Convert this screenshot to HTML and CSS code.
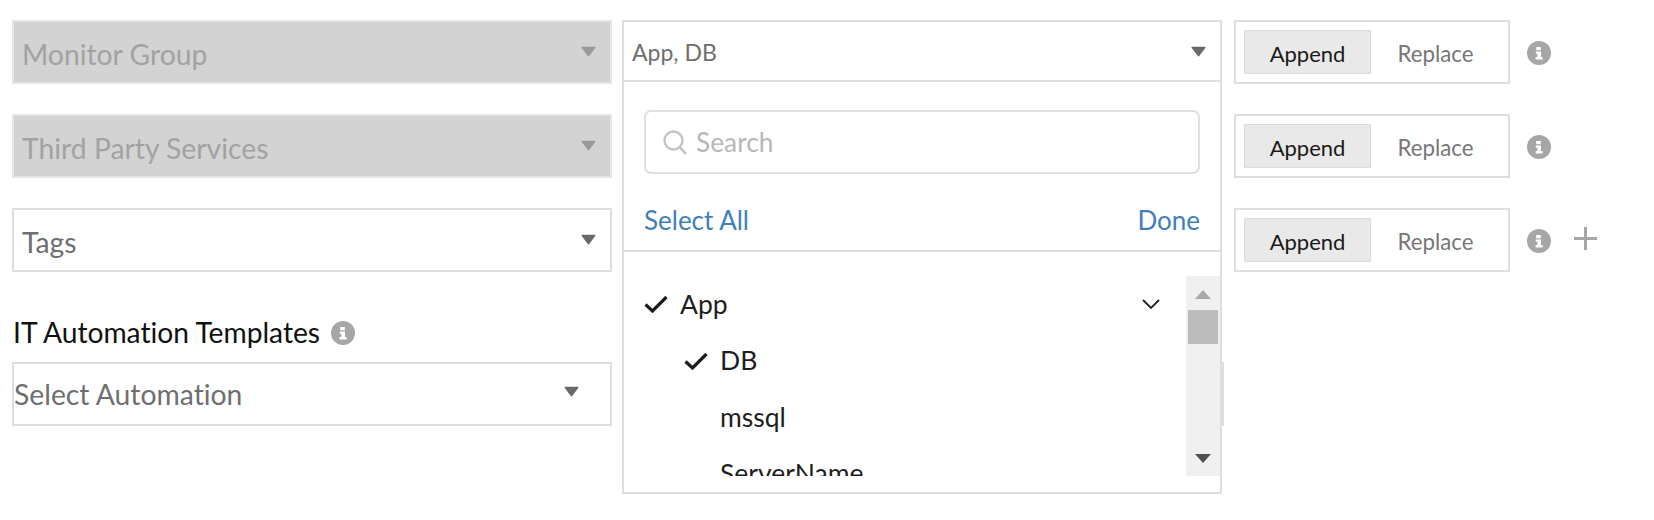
FILE: index.html
```html
<!DOCTYPE html>
<html lang="en">
<head>
<meta charset="utf-8">
<title>Monitor form</title>
<link rel="stylesheet" href="styles.css">
</head>
<body>
<svg class="defs" width="0" height="0" aria-hidden="true">
  <symbol id="caret" viewBox="0 0 14 10"><path d="M1 1.2H13L7 9Z" fill="currentColor" stroke="currentColor" stroke-width="1.2" stroke-linejoin="round"/></symbol>
  <symbol id="info" viewBox="0 0 24 24"><circle cx="12" cy="12" r="12" fill="#a6a6a6"/><path d="M9.2 6h4.6v3.2H9.2zM8.8 10.4h5.2v5.6h1.6v2.4H8.6V16h1.8v-3.2H8.8z" fill="#fff"/></symbol>
  <symbol id="check" viewBox="0 0 24 18"><path d="M1.5 9.5 8.5 16 22.5 2" fill="none" stroke="#1c1c1c" stroke-width="3.2"/></symbol>
</svg>
<main class="form">
  <div class="row">
    <div class="select disabled"><span>Monitor Group</span><svg class="caret"><use href="#caret"/></svg></div>
    <div class="open-wrap">
      <div class="select open-head"><span class="value">App, DB</span><svg class="caret"><use href="#caret"/></svg></div>
      <div class="panel">
        <div class="search">
          <svg class="search-icon" viewBox="0 0 24 25"><circle cx="10.5" cy="10.5" r="9" fill="none" stroke="#c4c4c4" stroke-width="2.4"/><path d="M16.8 17.2 23 24" stroke="#c4c4c4" stroke-width="2.6" fill="none"/></svg>
          <span>Search</span>
        </div>
        <div class="actions"><a>Select All</a><a>Done</a></div>
        <div class="list-wrap">
          <ul class="list">
            <li class="item"><svg class="check"><use href="#check"/></svg><span>App</span><svg class="chevron" viewBox="0 0 18 10"><path d="M1 1 9 9 17 1" fill="none" stroke="#222" stroke-width="1.8"/></svg></li>
            <li class="item child"><svg class="check"><use href="#check"/></svg><span>DB</span></li>
            <li class="item child"><span>mssql</span></li>
            <li class="item child"><span>ServerName</span></li>
          </ul>
          <div class="scrollbar">
            <svg class="arrow" viewBox="0 0 16 9"><path d="M8 0 16 9H0Z" fill="#a8a8a8"/></svg>
            <div class="thumb"></div>
            <svg class="arrow down" viewBox="0 0 16 9"><path d="M0 0H16L8 9Z" fill="#505050"/></svg>
          </div>
        </div>
      </div>
    </div>
    <div class="toggle"><span class="on">Append</span><span class="off">Replace</span></div>
    <svg class="info"><use href="#info"/></svg>
  </div>
  <div class="row">
    <div class="select disabled"><span>Third Party Services</span><svg class="caret"><use href="#caret"/></svg></div>
    <div class="spacer"></div>
    <div class="toggle"><span class="on">Append</span><span class="off">Replace</span></div>
    <svg class="info"><use href="#info"/></svg>
  </div>
  <div class="row">
    <div class="select"><span>Tags</span><svg class="caret"><use href="#caret"/></svg></div>
    <div class="spacer"></div>
    <div class="toggle"><span class="on">Append</span><span class="off">Replace</span></div>
    <svg class="info"><use href="#info"/></svg>
    <svg class="plus" viewBox="0 0 23 23"><path d="M11.5 0V23M0 11.5H23" stroke="#a6a6a6" stroke-width="3" fill="none"/></svg>
  </div>
  <div class="row last">
    <div class="field">
      <div class="label">IT Automation Templates<svg class="info small"><use href="#info"/></svg></div>
      <div class="select automation"><span>Select Automation</span><svg class="caret"><use href="#caret"/></svg></div>
    </div>
    <div class="select behind"></div>
  </div>
</main>
</body>
</html>
```
FILE: styles.css
```css
* { box-sizing: border-box; }
html, body { margin: 0; padding: 0; background: #fff; }
body { font-family: "Lato", "Liberation Sans", sans-serif; font-variant-ligatures: none; width: 1654px; height: 520px; overflow: hidden; }
.defs { position: absolute; }
.form { padding: 20px 0 0 12px; display: flex; flex-direction: column; gap: 30px; }
.row { display: flex; align-items: center; height: 64px; }
.row.last { height: 124px; align-items: flex-end; }
.select { width: 600px; height: 64px; flex: none; display: flex; align-items: center; justify-content: space-between; padding: 3px 14px 0 8px; border: 2px solid #dedede; font-size: 28.3px; color: #6e6f6f; background: #fff; }
.select .caret { width: 15px; height: 11px; margin-top: -5px; color: #696969; flex: none; }
.select.disabled { background: #d3d3d3; border-color: #e6e6e6; color: #a2a2a2; }
.select.disabled .caret { color: #9a9a9a; }
.spacer, .open-wrap { width: 600px; flex: none; margin-left: 10px; }
.open-wrap { position: relative; height: 64px; z-index: 2; }
.open-head { height: 62px; padding: 0 14px 0 9px; font-size: 23px; }
.open-head .caret { margin-top: 0; }
.open-head .value { margin-top: 2px; margin-left: -1px; }
.panel { position: absolute; left: 0; top: 62px; width: 600px; height: 412px; background: #fff; border: 2px solid #dedede; border-top: 0; padding-top: 28px; }
.search { margin: 0 20px; height: 64px; border: 2px solid #e0e0e0; border-radius: 7px; display: flex; align-items: center; padding-left: 17px; gap: 9px; font-size: 26.3px; color: #b7b7b7; }
.search-icon { width: 24px; height: 25px; flex: none; }
.actions { display: flex; justify-content: space-between; padding: 29px 20px 0; height: 78px; font-size: 26px; line-height: 34px; color: #3f7fbd; border-bottom: 2px solid #dedede; }
.list-wrap { display: flex; justify-content: space-between; margin-top: 24px; height: 200px; }
.list { list-style: none; margin: 0; padding: 0; flex: 1; overflow: hidden; }
.item { display: flex; align-items: center; height: 56.5px; padding-left: 20px; font-size: 26.5px; color: #1e1e1e; position: relative; }
.item span { position: absolute; left: 56px; }
.item.child { padding-left: 60px; }
.item.child span { left: 96px; margin-top: -1px; }
.check { width: 24px; height: 18px; }
.chevron { position: absolute; left: 518px; top: 23px; width: 18px; height: 10px; }
.scrollbar { width: 34px; flex: none; background: #f0f0f0; display: flex; flex-direction: column; align-items: center; padding-top: 14px; }
.arrow { width: 16px; height: 9px; flex: none; }
.thumb { width: 30px; height: 34px; margin-top: 11px; background: #bcbcbc; flex: none; }
.arrow.down { margin-top: auto; margin-bottom: 13px; }
.toggle { flex: none; width: 276px; height: 64px; margin-left: 12px; border: 2px solid #dedede; display: flex; align-items: center; padding: 0 8px; font-size: 22px; }
.toggle span { height: 44px; padding-top: 2px; display: flex; align-items: center; justify-content: center; }
.toggle .on { width: 127px; background: #e9e9e9; border: 1px solid #dcdcdc; color: #1a1a1a; }
.toggle .off { width: 129px; color: #777; font-size: 22.3px; }
.info { width: 24px; height: 24px; flex: none; margin: 2px 0 0 17px; }
.plus { width: 23px; height: 23px; flex: none; margin: -4px 0 0 23px; }
.field { flex: none; width: 600px; }
.label { display: flex; align-items: center; height: 60px; font-size: 28.2px; color: #111; padding: 0 0 0 1px; }
.info.small { margin: 2px 0 0 11px; }
.select.automation { padding: 0 31px 0 0; }
.select.behind { width: 602px; margin-left: 10px; }
```
